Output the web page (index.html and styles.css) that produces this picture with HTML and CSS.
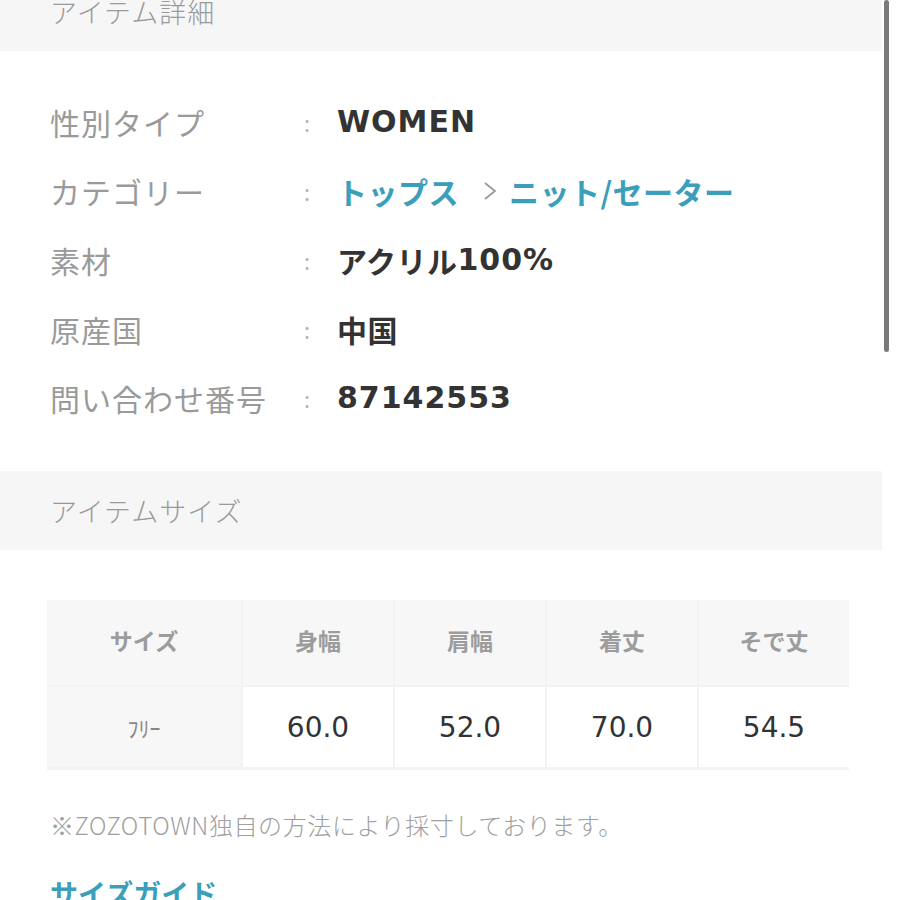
FILE: index.html
```html
<!DOCTYPE html>
<html lang="ja">
<head>
<meta charset="utf-8">
<title>アイテム詳細</title>
<link rel="stylesheet" href="styles.css">
</head>
<body>
<div class="page">
  <div class="bar bar-first"><h2 class="bar-title">アイテム詳細</h2></div>
  <dl class="details">
    <div class="row"><dt class="label">性別タイプ</dt><dd class="colon">:</dd><dd class="value latin">WOMEN</dd></div>
    <div class="row"><dt class="label">カテゴリー</dt><dd class="colon">:</dd><dd class="value cat"><a class="link">トップス</a><svg class="chev" width="14" height="20" viewBox="0 0 14 20"><polyline points="2,2 12,10 2,18" fill="none" stroke="#9a9a9a" stroke-width="1.8"/></svg><a class="link">ニット/セーター</a></dd></div>
    <div class="row"><dt class="label">素材</dt><dd class="colon">:</dd><dd class="value">アクリル<span class="latin">100%</span></dd></div>
    <div class="row"><dt class="label">原産国</dt><dd class="colon">:</dd><dd class="value">中国</dd></div>
    <div class="row"><dt class="label">問い合わせ番号</dt><dd class="colon">:</dd><dd class="value latin">87142553</dd></div>
  </dl>
  <div class="bar"><h2 class="bar-title">アイテムサイズ</h2></div>
  <div class="size-section">
    <div class="size-table">
      <div class="th">サイズ</div>
      <div class="th">身幅</div>
      <div class="th">肩幅</div>
      <div class="th">着丈</div>
      <div class="th">そで丈</div>
      <div class="td td-size">ﾌﾘｰ</div>
      <div class="td">60.0</div>
      <div class="td">52.0</div>
      <div class="td">70.0</div>
      <div class="td">54.5</div>
    </div>
    <p class="note">※ZOZOTOWN独自の方法により採寸しております。</p>
    <a class="guide">サイズガイド</a>
  </div>
</div>
<div class="scrollbar"></div>
</body>
</html>
```
FILE: styles.css
```css
html, body {
  margin: 0;
  padding: 0;
  background: #fff;
}
body {
  width: 900px;
  height: 900px;
  overflow: hidden;
  position: relative;
  font-family: "Noto Sans CJK JP", "Noto Sans", sans-serif;
}
.page {
  width: 882px;
  margin-top: -28px;
}
.bar {
  height: 79px;
  background: #f6f6f6;
  display: flex;
  align-items: center;
  padding-left: 50px;
}
.bar-title {
  margin: 0;
  font-size: 27px;
  font-weight: 300;
  color: #9a9a9a;
  letter-spacing: 1px;
  line-height: 30px;
}
.details {
  margin: 0;
  padding: 36px 0 39px 50px;
}
.row {
  display: grid;
  grid-template-columns: 253px 34px auto;
  height: 69px;
  align-items: center;
}
.label {
  font-size: 30px;
  color: #9a9a9a;
  letter-spacing: 1px;
  line-height: 40px;
}
.colon {
  margin: 0;
  font-size: 22px;
  color: #b5b5b5;
  line-height: 40px;
  padding-left: 1px;
}
.value {
  margin: 0;
  font-size: 30px;
  font-weight: 700;
  color: #333;
  line-height: 40px;
  letter-spacing: 0.5px;
  display: flex;
  align-items: center;
}
.latin {
  font-family: "DejaVu Sans", sans-serif;
  letter-spacing: 1px;
}
.cat .link {
  color: #3b9fbb;
  font-weight: 700;
}
.chev {
  margin: 0 12px 0 24px;
}
.size-section {
  padding: 50px 33px 0 47px;
}
.size-table {
  display: grid;
  grid-template-columns: 194px repeat(4, 1fr);
  grid-template-rows: 85px 80px;
  gap: 2px;
  padding-bottom: 3px;
  background: #f3f3f3;
}
.th {
  background: #f7f7f7;
  display: flex;
  align-items: center;
  justify-content: center;
  padding-bottom: 6px;
  font-size: 23px;
  font-weight: 700;
  color: #9c9c9c;
}
.td {
  background: #fff;
  display: flex;
  align-items: center;
  justify-content: center;
  font-family: "DejaVu Sans", sans-serif;
  font-size: 28px;
  color: #333;
}
.td-size {
  background: #f7f7f7;
  font-family: "Noto Sans CJK JP", sans-serif;
  font-size: 22px;
  color: #888;
}
.note {
  margin: 40px 0 0 3px;
  font-size: 24px;
  font-weight: 300;
  line-height: 30px;
  letter-spacing: 0.6px;
  color: #a0a0a0;
}
.guide {
  display: block;
  margin: 35px 0 0 3px;
  font-size: 28px;
  font-weight: 700;
  line-height: 36px;
  color: #3b9fbb;
}
.scrollbar {
  position: absolute;
  left: 884px;
  top: 0;
  width: 5px;
  height: 352px;
  background: #7a7a7a;
  border-radius: 3px;
}
```
